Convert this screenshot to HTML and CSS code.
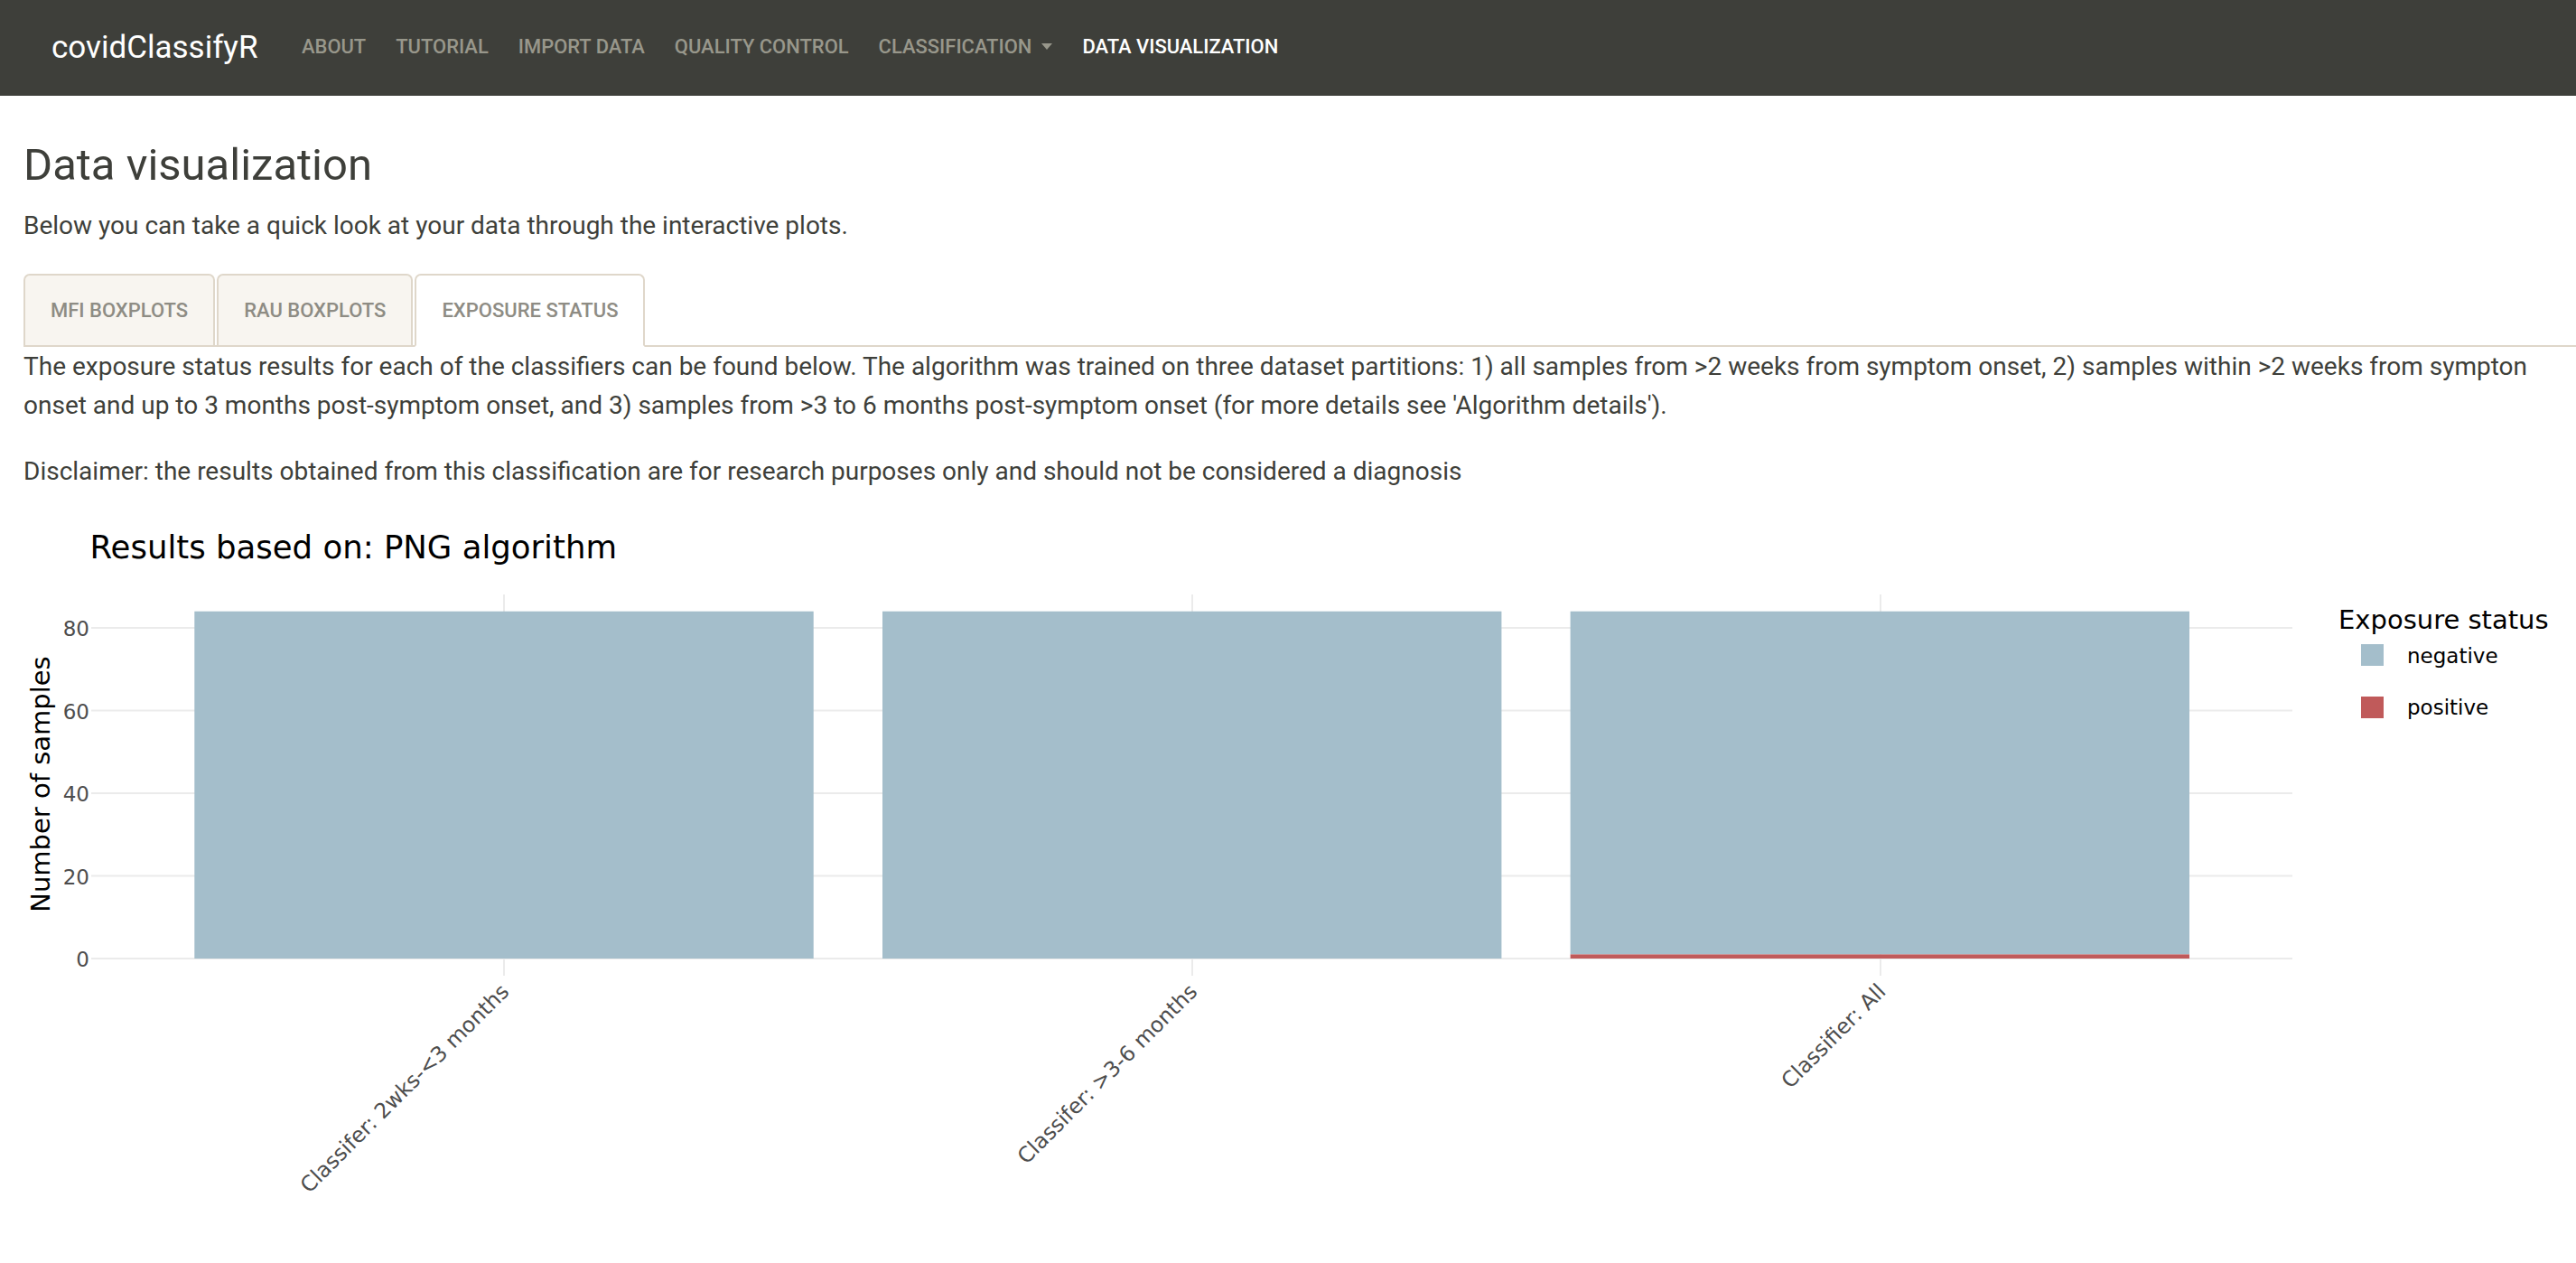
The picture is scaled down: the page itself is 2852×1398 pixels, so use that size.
FILE: index.html
```html
<!DOCTYPE html>
<html lang="en">
<head>
<meta charset="utf-8">
<title>covidClassifyR</title>
<link rel="stylesheet" href="styles.css">
</head>
<body>
<nav class="navbar">
  <span class="brand">covidClassifyR</span>
  <ul class="nav">
    <li><a class="nav-link">About</a></li>
    <li><a class="nav-link">Tutorial</a></li>
    <li><a class="nav-link">Import data</a></li>
    <li><a class="nav-link">Quality control</a></li>
    <li><a class="nav-link dropdown">Classification<span class="caret"></span></a></li>
    <li><a class="nav-link active">Data visualization</a></li>
  </ul>
</nav>
<main class="container">
  <h2 class="page-title">Data visualization</h2>
  <p class="intro">Below you can take a quick look at your data through the interactive plots.</p>
  <ul class="tabs">
    <li><a class="tab">MFI boxplots</a></li>
    <li><a class="tab">RAU boxplots</a></li>
    <li><a class="tab tab-active">Exposure status</a></li>
  </ul>
  <p class="desc">The exposure status results for each of the classifiers can be found below. The algorithm was trained on three dataset partitions: 1) all samples from &gt;2 weeks from symptom onset, 2) samples within &gt;2 weeks from sympton onset and up to 3 months post-symptom onset, and 3) samples from &gt;3 to 6 months post-symptom onset (for more details see 'Algorithm details').</p>
  <p class="desc">Disclaimer: the results obtained from this classification are for research purposes only and should not be considered a diagnosis</p>
  <svg class="plot" width="2800" height="829" viewBox="0 0 2800 829" xmlns="http://www.w3.org/2000/svg">
    <g transform="translate(-26,-569)">
      <text class="plot-title" x="99.5" y="615">Results based on: PNG algorithm</text>
      <g class="grid">
        <line x1="101" y1="692" x2="2538" y2="692"/>
        <line x1="101" y1="783.5" x2="2538" y2="783.5"/>
        <line x1="101" y1="875" x2="2538" y2="875"/>
        <line x1="101" y1="966.5" x2="2538" y2="966.5"/>
        <line x1="101" y1="1058" x2="2538" y2="1058"/>
        <line x1="558" y1="655" x2="558" y2="1077"/>
        <line x1="1320" y1="655" x2="1320" y2="1077"/>
        <line x1="2082" y1="655" x2="2082" y2="1077"/>
      </g>
      <rect class="neg" x="215.3" y="673.7" width="685.4" height="384.3"/>
      <rect class="neg" x="977" y="673.7" width="685.4" height="384.3"/>
      <rect class="neg" x="1738.6" y="673.7" width="685.4" height="379.7"/>
      <rect class="pos" x="1738.6" y="1053.4" width="685.4" height="4.6"/>
      <g class="ytick">
        <text x="99" y="701">80</text>
        <text x="99" y="792.5">60</text>
        <text x="99" y="884">40</text>
        <text x="99" y="975.5">20</text>
        <text x="99" y="1067">0</text>
      </g>
      <text class="axis-title" transform="translate(55,865) rotate(-90)">Number of samples</text>
      <g class="xtick">
        <text transform="translate(565,1096) rotate(-45)">Classifer: 2wks-&lt;3 months</text>
        <text transform="translate(1327,1096) rotate(-45)">Classifer: &gt;3-6 months</text>
        <text transform="translate(2089,1096) rotate(-45)">Classifier: All</text>
      </g>
      <text class="legend-title" x="2589" y="693">Exposure status</text>
      <rect class="neg" x="2614" y="710" width="25" height="24"/>
      <text class="legend-label" x="2665" y="731">negative</text>
      <rect class="pos" x="2614" y="768" width="25" height="24"/>
      <text class="legend-label" x="2665" y="788">positive</text>
    </g>
  </svg>
</main>
</body>
</html>
```
FILE: styles.css
```css
* { box-sizing: border-box; }
html, body { margin: 0; padding: 0; }
body {
  font-family: Roboto, "Liberation Sans", Arial, sans-serif;
  font-size: 28px;
  line-height: 43px;
  color: #3e3f3a;
  background: #ffffff;
  overflow: hidden;
}
.navbar {
  display: flex;
  align-items: center;
  height: 106px;
  padding-left: 57px;
  padding-bottom: 2px;
  background: #3e3f3a;
}
.brand {
  font-size: 35px;
  line-height: 1;
  color: #ffffff;
  margin-right: 32px;
}
.nav {
  display: flex;
  align-items: center;
  list-style: none;
  margin: 0;
  padding: 0;
}
.nav-link {
  display: flex;
  align-items: center;
  padding: 0 16.5px;
  font-size: 21.95px;
  font-weight: 500;
  text-transform: uppercase;
  color: #98978b;
  line-height: 1;
}
.nav-link.active { color: #ffffff; }
.caret {
  display: inline-block;
  width: 0;
  height: 0;
  margin-left: 11px;
  border-top: 7px solid #98978b;
  border-left: 6px solid transparent;
  border-right: 6px solid transparent;
}
.container {
  padding: 0 26px;
}
.page-title {
  font-size: 49px;
  font-weight: 400;
  line-height: 1.2;
  margin: 48px 0 15px;
}
.intro { margin: 0 0 32px; }
.tabs {
  display: flex;
  list-style: none;
  margin: 0 -26px 0 0;
  padding: 0;
  border-bottom: 2px solid #dfd7ca;
}
.tabs li { margin-right: 2px; margin-bottom: -2px; }
.tab {
  display: block;
  padding: 17px 28px;
  font-size: 22px;
  font-weight: 500;
  line-height: 43px;
  text-transform: uppercase;
  color: #8e8c84;
  background: #f8f5f0;
  border: 2px solid #dfd7ca;
  border-radius: 7px 7px 0 0;
}
.tab.tab-active {
  background: #ffffff;
  border-bottom-color: #ffffff;
}
.desc { margin: 0 0 30px; }
.desc:last-of-type { margin-bottom: 29px; }
.plot {
  display: block;
  overflow: visible;
  font-family: "DejaVu Sans", Verdana, sans-serif;
}
.plot-title { font-size: 35.5px; fill: #000000; }
.grid line { stroke: #ebebeb; stroke-width: 2; }
.neg { fill: #a4becb; }
.pos { fill: #c05a5a; }
.ytick text { font-size: 23px; fill: #4d4d4d; text-anchor: end; }
.xtick text { font-size: 23.5px; fill: #4d4d4d; text-anchor: end; }
.axis-title { font-size: 29px; fill: #000000; text-anchor: middle; }
.legend-title { font-size: 29px; fill: #000000; }
.legend-label { font-size: 23px; fill: #000000; }
```
